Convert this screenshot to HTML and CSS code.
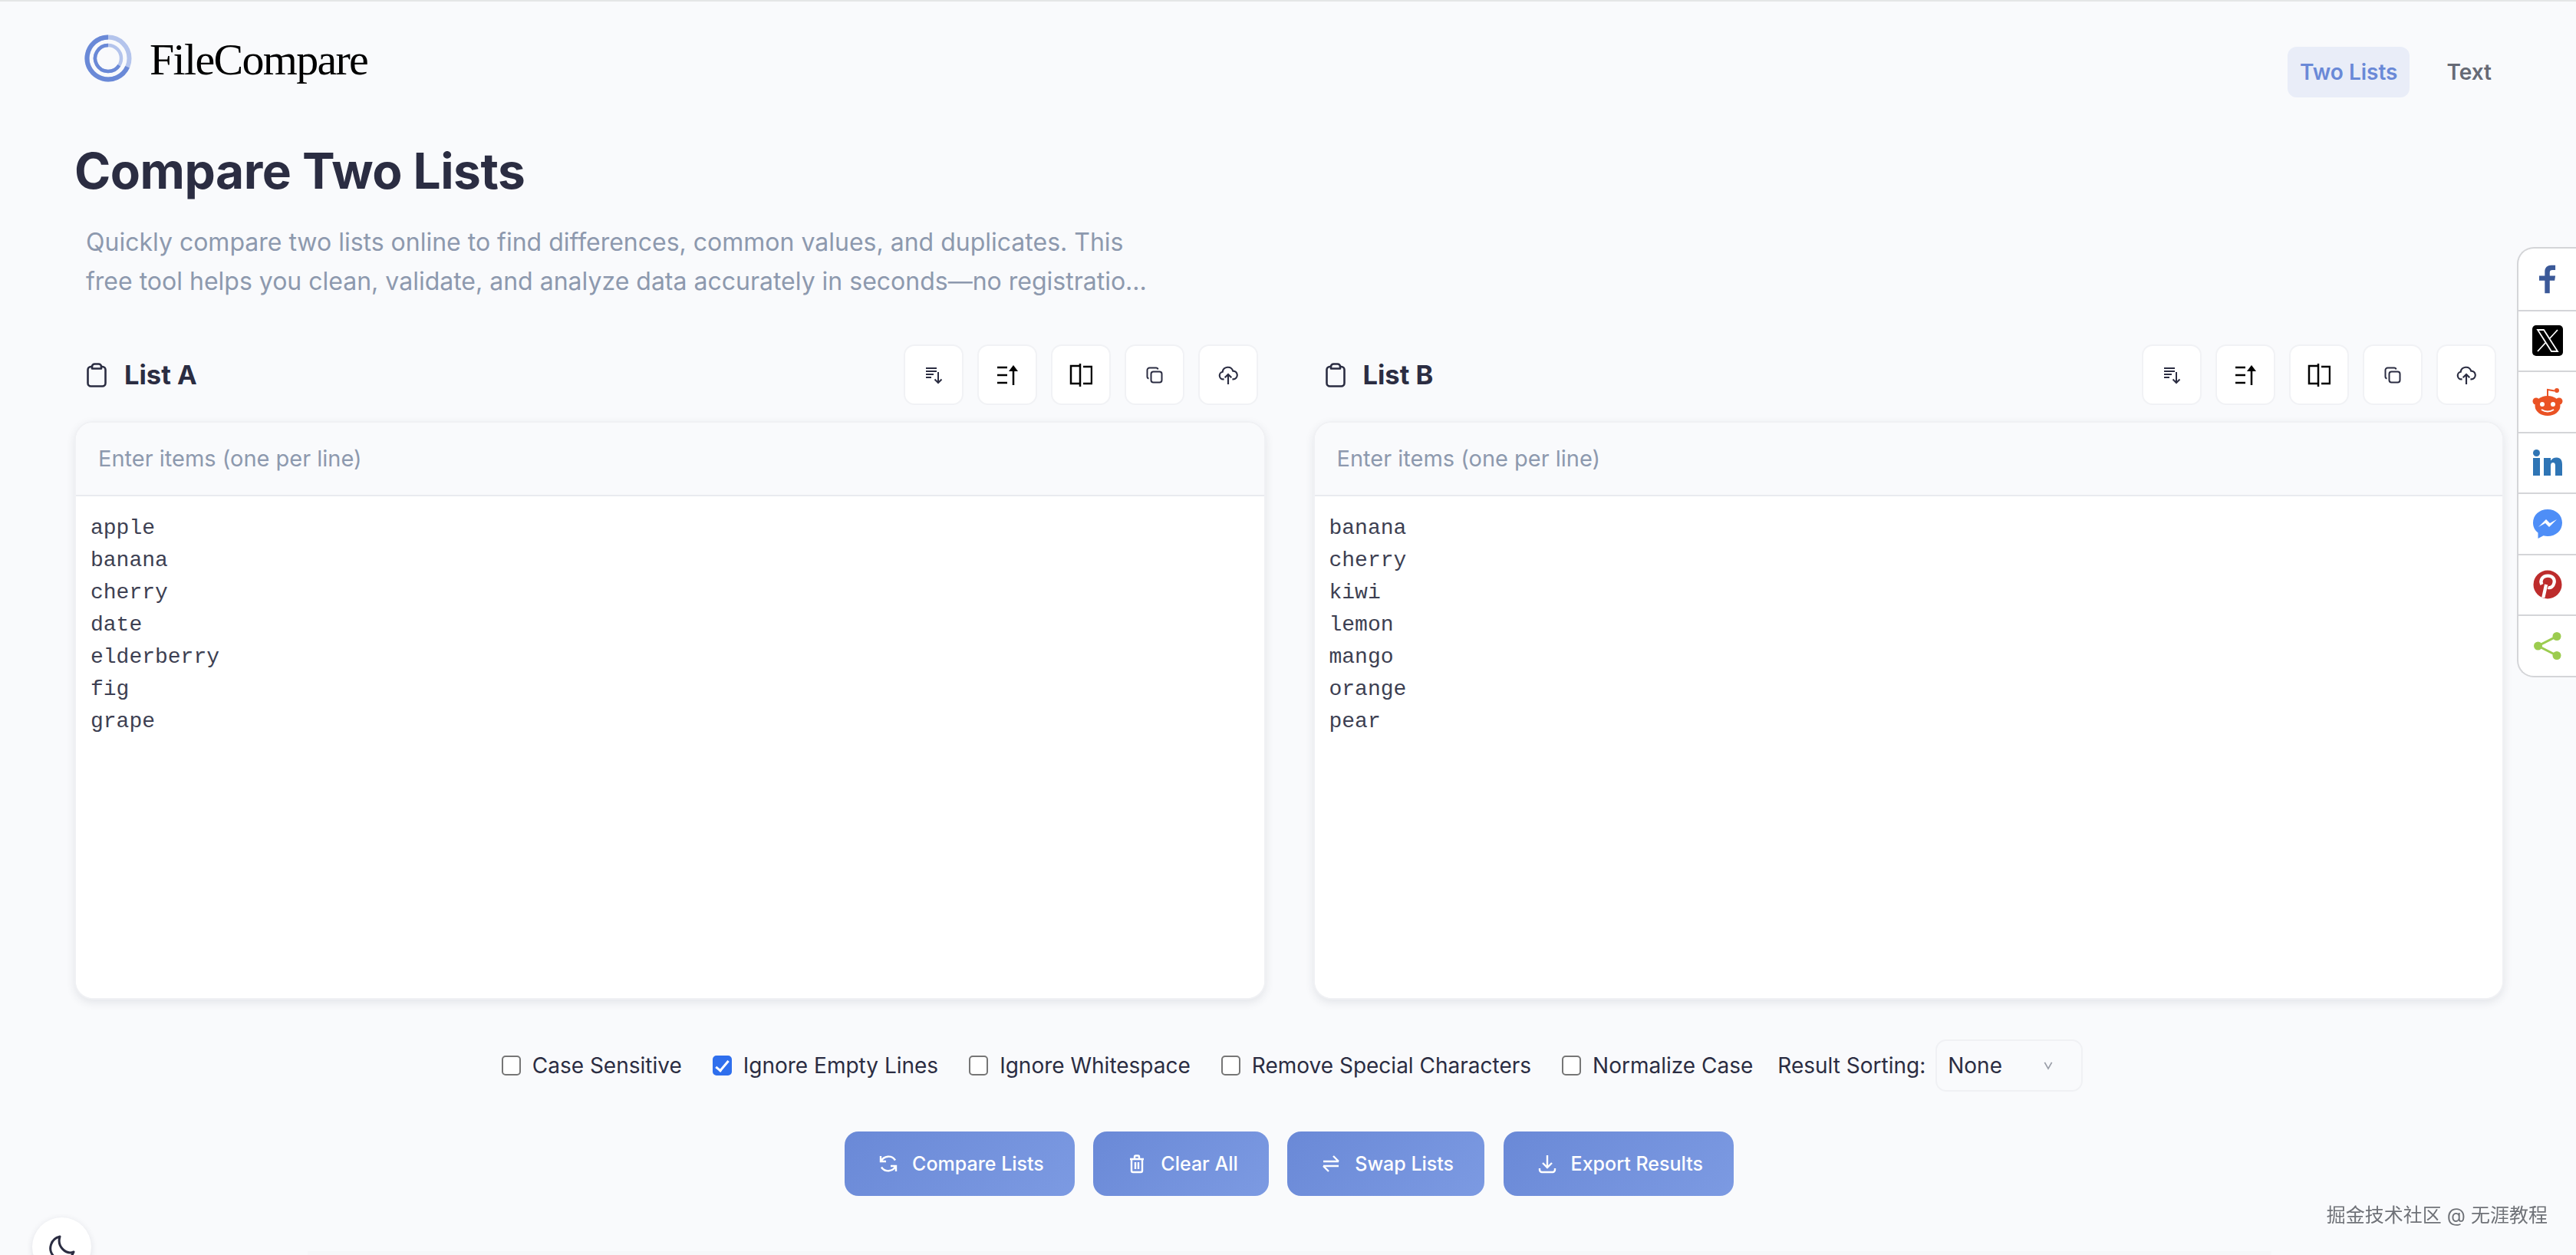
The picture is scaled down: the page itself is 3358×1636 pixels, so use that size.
FILE: index.html
```html
<!DOCTYPE html>
<html lang="en">
<head>
  <meta charset="UTF-8">
  <meta name="viewport" content="width=device-width, initial-scale=1.0">
  <title>FileCompare - Compare Two Lists</title>
  <link rel="stylesheet" href="styles.css">
</head>
<body>

  <header class="topbar">
    <a class="logo" href="#">
      <svg class="logo-mark" viewBox="0 0 62 62" fill="none">
        <circle cx="31" cy="31" r="27.5" stroke="#b4c4ec" stroke-width="6"/>
        <path d="M31 3.500A27.500 27.500 0 1 0 56.100 42.200" stroke="#6a89d7" stroke-width="6"/>
        <circle cx="31" cy="31" r="17" stroke="#b4c4ec" stroke-width="4.500"/>
        <path d="M31 14A17 17 0 1 0 45.300 40.200" stroke="#6a89d7" stroke-width="4.500"/>
      </svg>
      <span class="logo-text">FileCompare</span>
    </a>
    <nav class="nav">
      <a class="nav-link active" href="#">Two Lists</a>
      <a class="nav-link" href="#">Text</a>
    </nav>
  </header>

  <main class="page">
    <h1>Compare Two Lists</h1>
    <p class="intro">Quickly compare two lists online to find differences, common values, and duplicates. This free tool helps you clean, validate, and analyze data accurately in seconds—no registratio...</p>

    <div class="lists">
      <section class="list-col">
        <div class="list-head">
          <h2>
            <svg class="clip" viewBox="0 0 26 32" fill="none" stroke="currentColor" stroke-width="2.600" stroke-linejoin="round"><path d="M7 5H5.500a4 4 0 0 0-4 4v17.500a4 4 0 0 0 4 4h15a4 4 0 0 0 4-4V9a4 4 0 0 0-4-4H19"/><path d="M7 7.500V5a3.500 3.500 0 0 1 3.500-3.500h5A3.500 3.500 0 0 1 19 5v2.500z"/></svg>
            List A
          </h2>
          <div class="tools">
            <button class="tool"><svg viewBox="0 0 24 24" class="ico-s"><path d="M2 3h14M2 7h14M2 11h10M2 15h7M18 8v14M13.500 17.500 18 22l4.500-4.500"/></svg></button>
            <button class="tool"><svg viewBox="0 0 30 30" class="ico-b"><path d="M2 5h13M2 15h13M2 25h13M23 28V6"/><path class="solid" d="M23 2l6 8H17z"/></svg></button>
            <button class="tool"><svg viewBox="0 0 30 30" class="ico-b"><path d="M14 3H2v23h12M14 0v30M18 4h11v22H18"/></svg></button>
            <button class="tool"><svg viewBox="0 0 24 24" class="ico-s"><rect x="7.500" y="7.500" width="14" height="14" rx="3"/><path d="M4.500 16.500A2.500 2.500 0 0 1 2.500 14V5.500a3 3 0 0 1 3-3H14a2.500 2.500 0 0 1 2.500 2"/></svg></button>
            <button class="tool"><svg viewBox="0 0 24 24" class="ico-m"><path d="M7 17H6a4.500 4.500 0 0 1-.8-8.900A6.500 6.500 0 0 1 17.800 7 5 5 0 0 1 18 17h-1M12 23V11M8 15l4-4 4 4"/></svg></button>
          </div>
        </div>
        <div class="list-card">
          <div class="list-hint">Enter items (one per line)</div>
          <textarea class="list-input" spellcheck="false">apple
banana
cherry
date
elderberry
fig
grape</textarea>
        </div>
      </section>

      <section class="list-col">
        <div class="list-head">
          <h2>
            <svg class="clip" viewBox="0 0 26 32" fill="none" stroke="currentColor" stroke-width="2.600" stroke-linejoin="round"><path d="M7 5H5.500a4 4 0 0 0-4 4v17.500a4 4 0 0 0 4 4h15a4 4 0 0 0 4-4V9a4 4 0 0 0-4-4H19"/><path d="M7 7.500V5a3.500 3.500 0 0 1 3.500-3.500h5A3.500 3.500 0 0 1 19 5v2.500z"/></svg>
            List B
          </h2>
          <div class="tools">
            <button class="tool"><svg viewBox="0 0 24 24" class="ico-s"><path d="M2 3h14M2 7h14M2 11h10M2 15h7M18 8v14M13.500 17.500 18 22l4.500-4.500"/></svg></button>
            <button class="tool"><svg viewBox="0 0 30 30" class="ico-b"><path d="M2 5h13M2 15h13M2 25h13M23 28V6"/><path class="solid" d="M23 2l6 8H17z"/></svg></button>
            <button class="tool"><svg viewBox="0 0 30 30" class="ico-b"><path d="M14 3H2v23h12M14 0v30M18 4h11v22H18"/></svg></button>
            <button class="tool"><svg viewBox="0 0 24 24" class="ico-s"><rect x="7.500" y="7.500" width="14" height="14" rx="3"/><path d="M4.500 16.500A2.500 2.500 0 0 1 2.500 14V5.500a3 3 0 0 1 3-3H14a2.500 2.500 0 0 1 2.500 2"/></svg></button>
            <button class="tool"><svg viewBox="0 0 24 24" class="ico-m"><path d="M7 17H6a4.500 4.500 0 0 1-.8-8.900A6.500 6.500 0 0 1 17.800 7 5 5 0 0 1 18 17h-1M12 23V11M8 15l4-4 4 4"/></svg></button>
          </div>
        </div>
        <div class="list-card">
          <div class="list-hint">Enter items (one per line)</div>
          <textarea class="list-input" spellcheck="false">banana
cherry
kiwi
lemon
mango
orange
pear</textarea>
        </div>
      </section>
    </div>

    <div class="options">
      <label class="opt"><input type="checkbox"> Case Sensitive</label>
      <label class="opt"><input type="checkbox" checked> Ignore Empty Lines</label>
      <label class="opt"><input type="checkbox"> Ignore Whitespace</label>
      <label class="opt"><input type="checkbox"> Remove Special Characters</label>
      <label class="opt"><input type="checkbox"> Normalize Case</label>
      <div class="sorting">
        <span>Result Sorting:</span>
        <div class="select">None
          <svg viewBox="0 0 12 12" class="chev"><path d="M2 2.500 6 9.500l4-7"/></svg>
        </div>
      </div>
    </div>

    <div class="actions">
      <button class="btn"><svg viewBox="0 0 26 26"><path d="M3 3v7h7M23 23v-7h-7M3.500 10A10.500 10.500 0 0 1 22 8.500M22.500 16A10.500 10.500 0 0 1 4 17.500"/></svg>Compare Lists</button>
      <button class="btn"><svg viewBox="0 0 26 26"><path d="M4 7h18M10 7V4a1.500 1.500 0 0 1 1.500-1.500h3A1.500 1.500 0 0 1 16 4v3M6 7v15a2 2 0 0 0 2 2h10a2 2 0 0 0 2-2V7M11 11v9M15 11v9"/></svg>Clear All</button>
      <button class="btn"><svg viewBox="0 0 26 26"><path d="M3 10h20M16 3l7 7M23 16H3M10 23l-7-7"/></svg>Swap Lists</button>
      <button class="btn"><svg viewBox="0 0 26 26"><path d="M13 2v16M7 12l6 6 6-6M3 19v2a3 3 0 0 0 3 3h14a3 3 0 0 0 3-3v-2"/></svg>Export Results</button>
    </div>

    <div class="results-edge"></div>
  </main>

  <aside class="share">
    <a class="share-item" href="#"><svg viewBox="0 0 24 40" class="s-f"><path fill="#3b5998" d="M8 40V22H0v-7h8V9c0-6 4-9 9-9h6v7h-4c-3 0-4 1-4 4v4h8l-1 7h-7v18z"/></svg></a>
    <a class="share-item" href="#"><svg viewBox="0 0 40 40" class="s-x"><rect width="40" height="40" rx="5" fill="#000"/><path d="M7 6h8l18 28h-8zM33 6 22 18M18 22 7 34" fill="none" stroke="#fff" stroke-width="1.800"/></svg></a>
    <a class="share-item" href="#"><svg viewBox="0 0 40 38" class="s-r"><path d="M20 12V3l9 1.500" fill="none" stroke="#ea5224" stroke-width="2"/><circle cx="32" cy="4" r="3" fill="#ea5224"/><circle cx="5" cy="18" r="4.500" fill="#ea5224"/><circle cx="35" cy="18" r="4.500" fill="#ea5224"/><ellipse cx="20" cy="24" rx="16.500" ry="13" fill="#ea5224"/><circle cx="13" cy="22" r="3" fill="#fff"/><circle cx="27" cy="22" r="3" fill="#fff"/><path d="M12 29c5 3 11 3 16 0" fill="none" stroke="#fff" stroke-width="2"/></svg></a>
    <a class="share-item" href="#"><svg viewBox="0 0 38 34" class="s-l"><g fill="#2f75b5"><circle cx="4.500" cy="4.500" r="4.500"/><rect y="11" width="9" height="23"/><path d="M14 11h9v3.500c1.500-2.500 4.500-4.200 8-4 5 .2 7 3.500 7 9V34h-9V21c0-2.500-1-4-3-4s-3 1.500-3 4v13h-9z"/></g></svg></a>
    <a class="share-item" href="#"><svg viewBox="0 0 40 40" class="s-m"><path fill="#4e8ef7" d="M20 1C9 1 1 8.500 1 18.500c0 5.500 2.500 10 6.500 13V39l7-3.800c1.700.5 3.600.8 5.500.8 11 0 19-7.500 19-17.500S31 1 20 1z"/><path fill="#fff" d="m8 24 10-10 5 5 9-5-10 10-5-5z"/></svg></a>
    <a class="share-item" href="#"><svg viewBox="0 0 40 40" class="s-p"><circle cx="20" cy="20" r="19.500" fill="#bd2c2c"/><path d="M14 38l4-18M12 20c-3-6 1-12 8.500-12 6.500 0 9.500 4.500 8.500 9.500-1 5-5 8-8.500 6.500" fill="none" stroke="#fff" stroke-width="4.500"/></svg></a>
    <a class="share-item" href="#"><svg viewBox="0 0 36 36" class="s-s"><g fill="#9ccc4f"><circle cx="30" cy="5.500" r="5.500"/><circle cx="5.500" cy="18" r="5.500"/><circle cx="30" cy="30.500" r="5.500"/></g><path d="M30 5.500 5.500 18 30 30.500" fill="none" stroke="#9ccc4f" stroke-width="3"/></svg></a>
  </aside>

  <button class="theme-toggle"><svg viewBox="0 0 36 36"><path d="M15 2A15.500 15.500 0 1 0 33 22C23 26 11 15 15 2z"/></svg></button>

  <div class="watermark">掘金技术社区 @ 无涯教程</div>

</body>
</html>
```

FILE: styles.css
```css
* {
  box-sizing: border-box;
}

html, body {
  height: 100%;
  overflow: hidden;
}

body {
  margin: 0;
  border-top: 2px solid #e4e6e6;
  background: #f9fafc;
  color: #2b2d42;
  font-family: Inter, "Noto Sans CJK SC", sans-serif;
}

a {
  text-decoration: none;
  color: inherit;
}

button {
  font-family: inherit;
  cursor: pointer;
}

.topbar {
  display: flex;
  justify-content: space-between;
  padding: 41px 94px 0 110px;
  height: 176px;
}

.logo {
  display: flex;
  align-items: flex-start;
  gap: 23px;
}

.logo-mark {
  width: 62px;
  height: 62px;
  margin-top: 2px;
}

.logo-text {
  font-family: "Liberation Serif", serif;
  font-size: 58px;
  line-height: 70px;
  color: #000;
  letter-spacing: -1.7px;
}

.nav {
  display: flex;
  gap: 32px;
  padding-top: 18px;
}

.nav-link {
  height: 66px;
  padding: 0 16px;
  border-radius: 12px;
  font-size: 28px;
  font-weight: 600;
  line-height: 66px;
  color: #666a75;
}

.nav-link.active {
  background: #e9edf8;
  color: #6a89d7;
}

.page {
  padding: 0 94px 0 97px;
}

h1 {
  margin: 0;
  font-size: 64px;
  font-weight: 700;
  line-height: 90px;
  letter-spacing: -0.5px;
}

.intro {
  width: 1400px;
  margin: 22px 0 0 15px;
  font-size: 32px;
  line-height: 51px;
  color: #8d99ae;
}

.lists {
  display: grid;
  grid-template-columns: 1fr 1fr;
  gap: 62px;
  margin-top: 57px;
}

.list-head {
  display: flex;
  justify-content: space-between;
  align-items: center;
  padding: 0 10px 0 16px;
  height: 79px;
}

.list-head h2 {
  display: flex;
  align-items: center;
  gap: 23px;
  margin: 0;
  font-size: 34.500px;
  font-weight: 700;
}

.clip {
  width: 26px;
  height: 32px;
}

.tools {
  display: flex;
  gap: 18px;
}

.tool {
  display: flex;
  align-items: center;
  justify-content: center;
  width: 78px;
  height: 79px;
  padding: 0;
  background: #fff;
  border: 2px solid #f1f2f5;
  border-radius: 14px;
}

.tool svg {
  fill: none;
  stroke: #2b2d42;
  stroke-width: 2;
}

.tool .ico-s {
  width: 24px;
  height: 24px;
}

.tool .ico-m {
  width: 26px;
  height: 26px;
}

.tool .ico-b {
  width: 30px;
  height: 30px;
  stroke: #000;
  stroke-width: 2.500;
}

.tool .solid {
  fill: #000;
  stroke: none;
}

.list-card {
  height: 754px;
  margin-top: 21px;
  background: #fff;
  border: 2px solid #f0f1f4;
  border-radius: 24px;
  box-shadow: 0 4px 12px rgba(43, 45, 66, 0.1);
  overflow: hidden;
}

.list-hint {
  height: 96px;
  padding: 0 29px;
  background: #f9fafc;
  border-bottom: 2px solid #e9ebef;
  font-size: 29px;
  line-height: 94px;
  color: #8d99ae;
}

.list-input {
  display: block;
  width: 100%;
  height: 654px;
  padding: 21px 19px;
  border: none;
  outline: none;
  resize: none;
  background: #fff;
  color: #3d3f52;
  font-family: "Liberation Mono", monospace;
  font-size: 28px;
  line-height: 42px;
}

.options {
  display: flex;
  justify-content: center;
  align-items: center;
  gap: 40px;
  height: 68px;
  margin-top: 52px;
  padding-left: 8px;
  font-size: 28px;
}

.opt {
  display: flex;
  align-items: center;
  gap: 15px;
}

.opt input {
  appearance: none;
  position: relative;
  width: 25px;
  height: 26px;
  margin: 0;
  background: #fff;
  border: 2px solid #767676;
  border-radius: 5px;
}

.opt input:checked {
  background: #2f6fed;
  border-color: #2f6fed;
}

.opt input:checked::after {
  content: "";
  position: absolute;
  left: 6px;
  top: 1px;
  width: 6px;
  height: 15px;
  border: solid #fff;
  border-width: 0 3px 3px 0;
  transform: rotate(40deg);
}

.sorting {
  display: flex;
  align-items: center;
  gap: 13px;
  margin-left: -8px;
}

.select {
  display: flex;
  justify-content: space-between;
  align-items: center;
  width: 192px;
  height: 68px;
  padding: 0 36px 0 14px;
  border: 2px solid #f0f1f4;
  border-radius: 14px;
}

.chev {
  width: 14px;
  height: 14px;
  fill: none;
  stroke: #9a9ea8;
  stroke-width: 1.500;
}

.actions {
  display: flex;
  justify-content: center;
  gap: 24.500px;
  margin-top: 52px;
}

.btn {
  display: flex;
  align-items: center;
  gap: 18px;
  height: 84px;
  padding: 0 40px 0 44px;
  border: none;
  border-radius: 18px;
  background: linear-gradient(135deg, #6a89d7, #7c9ae2);
  color: #fff;
  font-size: 25px;
  font-weight: 500;
}

.btn svg {
  width: 26px;
  height: 26px;
  fill: none;
  stroke: #fff;
  stroke-width: 2.400;
}

.results-edge {
  width: 2560px;
  height: 10px;
  margin: 72px auto 0;
  background: #f6f7f9;
}

.share {
  position: fixed;
  top: 322px;
  right: 0;
  width: 77px;
  background: #fff;
  border: 2px solid #d4d5d8;
  border-right: none;
  border-radius: 22px 0 0 22px;
}

.share-item {
  display: flex;
  align-items: center;
  justify-content: center;
  height: 79.500px;
  border-top: 2px solid #d4d5d8;
}

.share-item:first-child {
  border-top: none;
}

.s-f { width: 22px; height: 38px; }
.s-x { width: 40px; height: 40px; }
.s-r { width: 40px; height: 38px; }
.s-l { width: 38px; height: 34px; }
.s-m { width: 40px; height: 40px; }
.s-p { width: 40px; height: 38px; }
.s-s { width: 36px; height: 38px; }

.theme-toggle {
  position: fixed;
  left: 42px;
  top: 1587px;
  width: 77px;
  height: 77px;
  padding: 4px 0 0;
  display: flex;
  align-items: center;
  justify-content: center;
  background: #fff;
  border: none;
  border-radius: 50%;
  box-shadow: 0 2px 8px rgba(43, 45, 66, 0.12);
}

.theme-toggle svg {
  width: 36px;
  height: 36px;
  fill: none;
  stroke: #2b2d42;
  stroke-width: 3;
  stroke-linejoin: round;
}

.watermark {
  position: fixed;
  right: 37px;
  top: 1567px;
  font-size: 25px;
  line-height: 34px;
  color: #6f7278;
  text-shadow: 1px 1px 1px #fff;
}
```
